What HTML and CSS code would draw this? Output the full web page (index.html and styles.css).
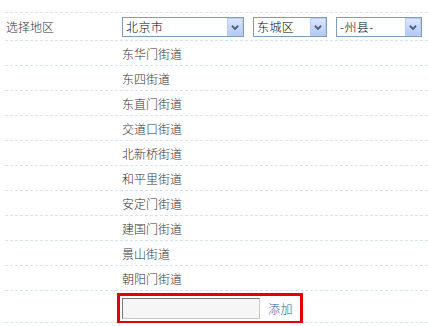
FILE: index.html
```html
<!doctype html>
<html lang="zh-CN">
  <head>
    <meta charset="UTF-8" />
    <meta name="viewport" content="width=device-width, initial-scale=1.0" />
    <title>选择地区</title>
    <link rel="stylesheet" href="styles.css">
  </head>
  <body>
    <div class="region-form">
      <div class="form-row row-select">
        <div class="row-label">选择地区</div>
        <div class="row-field select-group">
          <div class="select-box select-city">
            <span class="select-value">北京市</span>
            <span class="select-arrow">
              <svg width="16" height="17" viewBox="0 0 16 17"><polyline points="4.5,6.5 8,10 11.5,6.5" fill="none" stroke="#4d6185" stroke-width="2.2"/></svg>
            </span>
          </div>
          <div class="select-box select-district">
            <span class="select-value">东城区</span>
            <span class="select-arrow">
              <svg width="16" height="17" viewBox="0 0 16 17"><polyline points="4.5,6.5 8,10 11.5,6.5" fill="none" stroke="#4d6185" stroke-width="2.2"/></svg>
            </span>
          </div>
          <div class="select-box select-county">
            <span class="select-value">-州县-</span>
            <span class="select-arrow">
              <svg width="16" height="17" viewBox="0 0 16 17"><polyline points="4.5,6.5 8,10 11.5,6.5" fill="none" stroke="#4d6185" stroke-width="2.2"/></svg>
            </span>
          </div>
        </div>
      </div>
      <div class="form-row"><div class="row-label"></div><div class="row-field">东华门街道</div></div>
      <div class="form-row"><div class="row-label"></div><div class="row-field">东四街道</div></div>
      <div class="form-row"><div class="row-label"></div><div class="row-field">东直门街道</div></div>
      <div class="form-row"><div class="row-label"></div><div class="row-field">交道口街道</div></div>
      <div class="form-row"><div class="row-label"></div><div class="row-field">北新桥街道</div></div>
      <div class="form-row"><div class="row-label"></div><div class="row-field">和平里街道</div></div>
      <div class="form-row"><div class="row-label"></div><div class="row-field">安定门街道</div></div>
      <div class="form-row"><div class="row-label"></div><div class="row-field">建国门街道</div></div>
      <div class="form-row"><div class="row-label"></div><div class="row-field">景山街道</div></div>
      <div class="form-row"><div class="row-label"></div><div class="row-field">朝阳门街道</div></div>
      <div class="form-row row-add">
        <div class="row-label"></div>
        <div class="row-field">
          <div class="add-box">
            <input type="text" class="add-input" />
            <a href="#" class="add-link" onclick="return false;">添加</a>
          </div>
        </div>
      </div>
    </div>
  </body>
</html>
```

FILE: styles.css
```css
body {
  margin: 0;
  padding-top: 12px;
  background-color: #fff;
  color: #333;
  font-family: "Noto Sans CJK SC", "Liberation Sans", sans-serif;
  font-size: 12px;
  font-weight: 300;
}

.region-form {
  margin-left: 5px;
}

.form-row {
  display: grid;
  grid-template-columns: 117px 1fr;
  height: 25px;
  box-sizing: border-box;
  border-bottom: 1px dashed #d6e4ec;
  align-items: center;
}

.row-label {
  padding-left: 1px;
}

.row-select {
  height: 29px;
  border-top: 1px dashed #d6e4ec;
}

.select-group {
  display: flex;
  gap: 9px;
}

.select-box {
  display: flex;
  align-items: center;
  justify-content: space-between;
  height: 20px;
  box-sizing: border-box;
  border: 1px solid #7f9db9;
  background-color: #fff;
  color: #000;
  padding-left: 3px;
}

.select-city {
  width: 122px;
}

.select-district {
  width: 74px;
}

.select-county {
  width: 86px;
}

.select-value {
  font-size: 12px;
  letter-spacing: 0.4px;
  line-height: 18px;
}

.select-arrow {
  display: flex;
  width: 16px;
  height: 18px;
  box-sizing: border-box;
  border: 1px solid #b9cdf5;
  background: linear-gradient(#dbe6fd, #b5c9f6);
}

.select-arrow svg {
  display: block;
}

.row-add {
  height: 32px;
  align-items: start;
}

.add-box {
  display: inline-flex;
  align-items: center;
  gap: 8px;
  margin-top: 2px;
  height: 31px;
  box-sizing: border-box;
  margin-left: -5px;
  padding: 1px 7px 2px 2px;
  border: 3px solid #e60000;
}

.add-input {
  width: 138px;
  height: 21px;
  box-sizing: border-box;
  margin: 0;
  padding: 0;
  border: 1px solid #c8c8c8;
  border-top-color: #7a7a7a;
  border-left-color: #7a7a7a;
  background-color: #f6f6f6;
}

.add-link {
  color: #1d5aa4;
  text-decoration: none;
  font-size: 12px;
  letter-spacing: 0.5px;
}
```
